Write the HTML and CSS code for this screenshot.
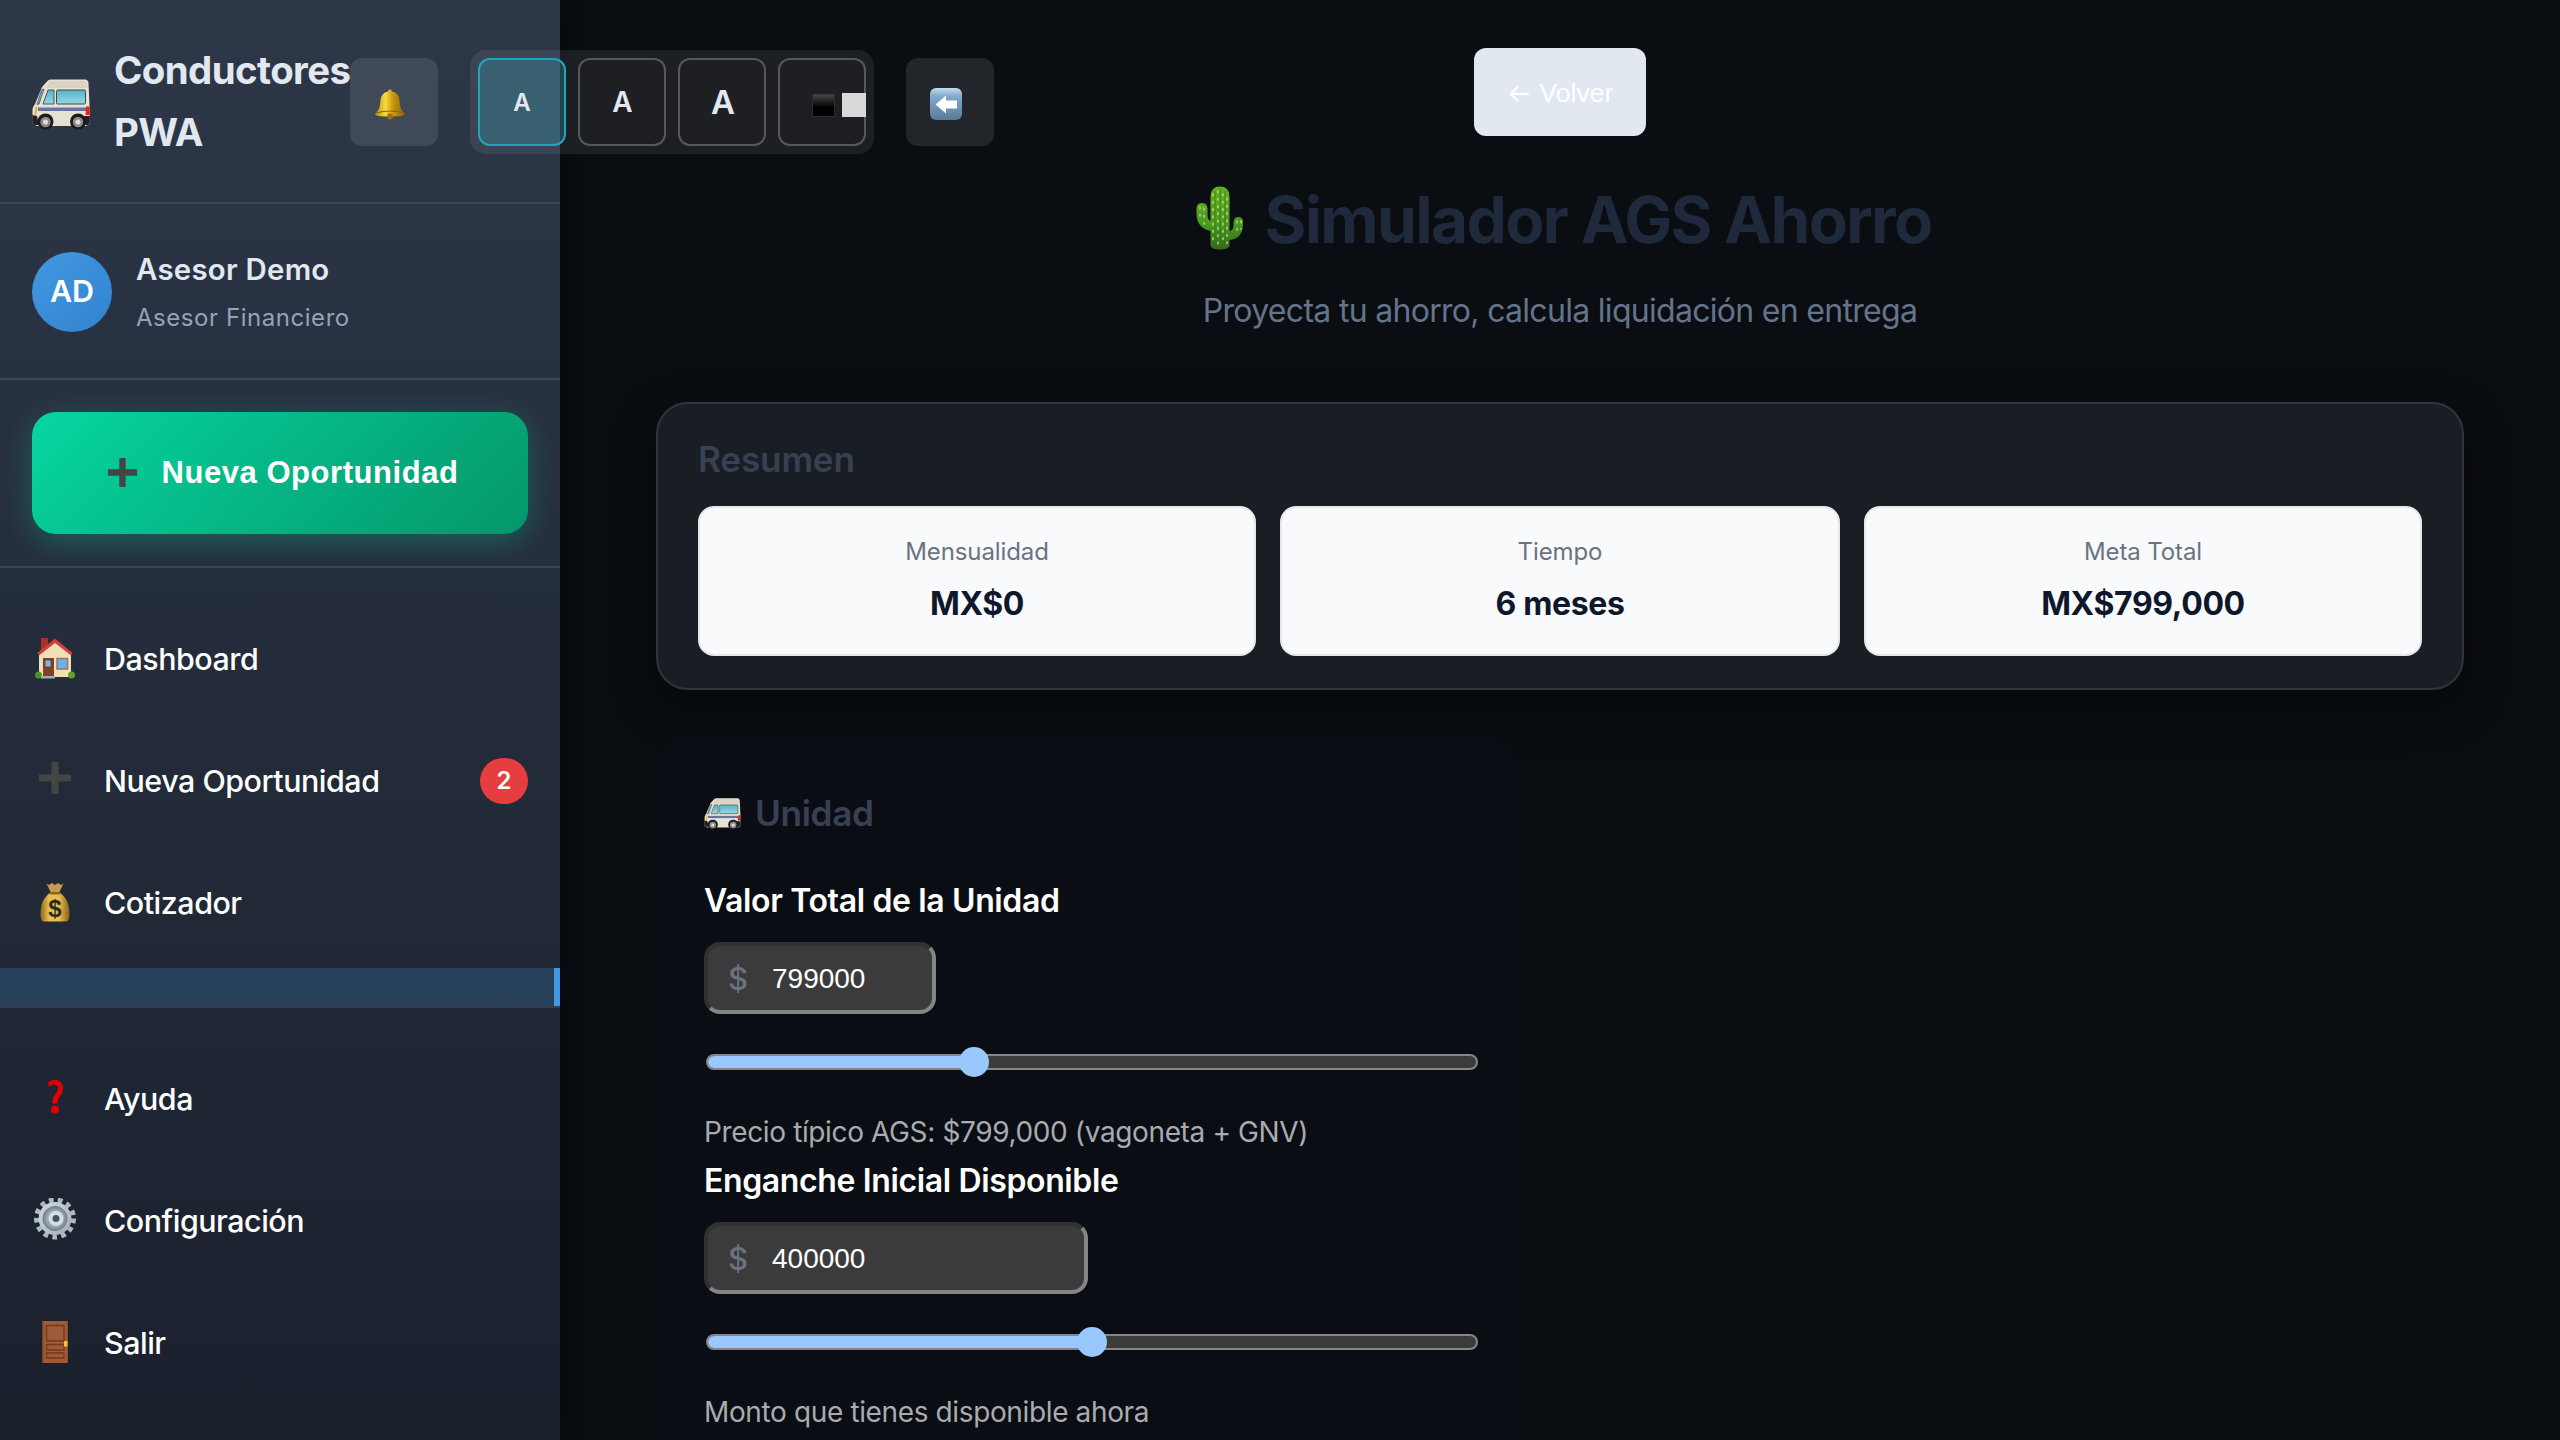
FILE: index.html
```html
<!DOCTYPE html>
<html lang="es">
<head>
<meta charset="utf-8">
<title>Conductores PWA</title>
<link rel="stylesheet" href="styles.css">
</head>
<body>
<svg class="defs" width="0" height="0" aria-hidden="true">
  <defs>
    <linearGradient id="g-glass" x1="0" y1="0" x2="0" y2="1"><stop offset="0" stop-color="#5fb0c2"/><stop offset="1" stop-color="#8fdbe6"/></linearGradient>
    <linearGradient id="g-gold" x1="0" y1="0" x2="1" y2="0"><stop offset="0" stop-color="#b98a12"/><stop offset=".35" stop-color="#f7dc3c"/><stop offset=".6" stop-color="#c9970f"/><stop offset="1" stop-color="#8a6204"/></linearGradient>
    <linearGradient id="g-black" x1="0" y1="0" x2="0" y2="1"><stop offset="0" stop-color="#4a4a4a"/><stop offset=".6" stop-color="#000"/></linearGradient>
    <linearGradient id="g-arrow" x1="0" y1="0" x2="0" y2="1"><stop offset="0" stop-color="#c3dcee"/><stop offset=".25" stop-color="#83abcd"/><stop offset="1" stop-color="#587a98"/></linearGradient>
    <linearGradient id="g-cactus" x1="0" y1="0" x2="0" y2="1"><stop offset="0" stop-color="#63b022"/><stop offset=".6" stop-color="#4a9a20"/><stop offset="1" stop-color="#35691a"/></linearGradient>
    <linearGradient id="g-bag" x1="0" y1="0" x2="1" y2="0"><stop offset="0" stop-color="#8f6420"/><stop offset=".3" stop-color="#e9c24c"/><stop offset=".65" stop-color="#e5bd48"/><stop offset="1" stop-color="#8a5c1c"/></linearGradient>
    <linearGradient id="g-gear" x1="0" y1="0" x2="1" y2="1"><stop offset="0" stop-color="#cfdbe3"/><stop offset="1" stop-color="#a3adb6"/></linearGradient>
    <symbol id="van" viewBox="0 0 58 51">
      <path d="M16 1.500Q17 .5 19 .5H53Q56 .5 56.500 4L57.500 26V45L54 47H5L.5 45V30Q1 27 3 25L10 8Z" fill="#e6e2d3"/>
      <path d="M14 9L18 2H54L56 9Z" fill="#d9d5c2"/>
      <path d="M9.500 11L12 10L7 25L5 25.500Z" fill="#6fb9c6" stroke="#33464e" stroke-width=".7"/>
      <path d="M16 11H22V25H11Z" fill="url(#g-glass)" stroke="#3a4950" stroke-width=".9"/>
      <rect x="24.500" y="11" width="29" height="14" rx="1.200" fill="url(#g-glass)" stroke="#3a4950" stroke-width="1"/>
      <path d="M6 28.500H54V32H6Z" fill="#6874a8"/>
      <path d="M3.500 28L5.500 28L4 37L2.500 35Z" fill="#f3a93b"/>
      <path d="M54 27.500H57.500V36H53.500Z" fill="#ea2411"/>
      <path d="M.3 36L5 37L7 46H2Q.3 46 .3 44ZM50 37H57.700V44Q57.500 46.500 52 46Z" fill="#222"/>
      <g><circle cx="13.500" cy="42.500" r="8" fill="#1b1b1b"/><circle cx="13.500" cy="43" r="5.200" fill="#8c8c8c"/><circle cx="13.500" cy="43" r="2.500" fill="#ddd"/></g>
      <g><circle cx="46" cy="42.500" r="8" fill="#1b1b1b"/><circle cx="46" cy="43" r="5.200" fill="#8c8c8c"/><circle cx="46" cy="43" r="2.500" fill="#ddd"/></g>
    </symbol>
    <symbol id="plus" viewBox="0 0 46 46"><path d="M19.500 4H26.500V16.500H39V23.500H26.500V36H19.500V23.500H7V16.500H19.500Z" fill="#454545"/></symbol>
  </defs>
</svg>
<div class="app">
  <aside class="sidebar">
    <header class="brand">
      <svg class="brand-icon"><use href="#van"/></svg>
      <div class="brand-name">Conductores PWA</div>
    </header>
    <section class="user">
      <div class="avatar">AD</div>
      <div class="user-text">
        <div class="user-name">Asesor Demo</div>
        <div class="user-role">Asesor Financiero</div>
      </div>
    </section>
    <section class="cta-wrap">
      <div class="cta"><svg class="cta-icon" viewBox="7 4 32 32"><use href="#plus" width="46" height="46"/></svg><span>Nueva Oportunidad</span></div>
    </section>
    <nav class="nav">
      <div class="item">
        <svg class="icon" viewBox="0 0 46 46">
          <path d="M9 2H16V12L9 17Z" fill="#a5312a"/>
          <path d="M7 18L23 5L39 18V41H7Z" fill="#f0dfb9"/>
          <path d="M23 2.500L40.500 17L39 19.500L23 7L7 19.500L5.500 17Z" fill="#cf4138"/>
          <rect x="11" y="22" width="11" height="19" fill="#7d4029"/><rect x="13.500" y="24.500" width="5" height="6" fill="#79b9e8"/>
          <rect x="25" y="22.500" width="10.500" height="10.500" fill="#6bb2ea" stroke="#9a735a" stroke-width="1.500"/>
          <circle cx="6.500" cy="39" r="3.500" fill="#4f9420"/><circle cx="39.500" cy="39" r="3.500" fill="#5da127"/>
          <rect x="9" y="40" width="14" height="2.500" fill="#aaa"/>
        </svg><span>Dashboard</span>
      </div>
      <div class="item"><svg class="icon icon-plus"><use href="#plus"/></svg><span>Nueva Oportunidad</span><b class="badge">2</b></div>
      <div class="item">
        <svg class="icon" viewBox="0 0 46 46">
          <path d="M14.500 3.500L17 5L20 3L23 5L26 3L29 5L31.500 3.500L27 13H19Z" fill="#c69a52"/>
          <path d="M18 13H28C34 17 37 23 37.500 32Q38 41.500 34 41.500H12Q8 41.500 8.500 32C9 23 12 17 18 13Z" fill="url(#g-bag)"/>
          <rect x="17.500" y="12" width="11" height="2.500" rx="1" fill="#8f641f"/>
          <text x="23" y="37" text-anchor="middle" class="bag-sign">$</text>
        </svg><span>Cotizador</span>
      </div>
      <div class="item-active"></div>
    </nav>
    <nav class="nav nav-bottom">
      <div class="item">
        <svg class="icon" viewBox="0 0 46 46"><path d="M16 6.500Q20 3 25 4Q31.500 6 31 13Q30.500 18 27 21.500Q25 24 25.500 27.500H20.500Q19.500 22 23.500 18Q26.500 14.500 26 11Q25 8 21.500 8.500Q18.500 9 17 11Z" fill="#e30000"/><circle cx="23" cy="33.500" r="4" fill="#e30000"/></svg>
        <span>Ayuda</span>
      </div>
      <div class="item">
        <svg class="icon" viewBox="0 0 46 46">
          <circle cx="23" cy="20.500" r="18.500" fill="none" stroke="#aeb9c2" stroke-width="5" stroke-dasharray="4.700 4.242"/>
          <circle cx="23" cy="20.500" r="16.500" fill="url(#g-gear)"/>
          <circle cx="23" cy="20.500" r="12" fill="#84909a" stroke="#6d7881" stroke-width="1"/>
          <circle cx="23" cy="20.500" r="9.500" fill="#9ba7b0"/>
          <circle cx="24" cy="20.500" r="5.500" fill="#4a545c" stroke="#d3dfe7" stroke-width="4"/>
        </svg><span>Configuración</span>
      </div>
      <div class="item">
        <svg class="icon" viewBox="0 0 46 46">
          <rect x="10.500" y="1" width="25.500" height="42" fill="#a05a38"/>
          <path d="M11 1V43M35.500 1V43" stroke="#8a4a2b"/>
          <path d="M14.500 5.500H32V21H14.500ZM14.500 24.500H32V30H14.500ZM14.500 33H32V38H14.500Z" fill="#9f5a37" stroke="#74391d" stroke-width="1.300"/>
          <rect x="32" y="21" width="3.500" height="5.500" fill="#f1c433"/>
        </svg><span>Salir</span>
      </div>
    </nav>
  </aside>

  <main class="main">
    <div class="back"><span class="back-arrow">←</span> Volver</div>
    <h1 class="title">
      <svg class="cactus" viewBox="0 0 48 64">
        <path d="M14.500 10Q15 .5 24 .5Q33 .5 33.500 10V45Q38 44 37.500 39V36Q38 31 42.500 31Q47.500 31 47 37Q47 53 33.500 54V60Q32 63.500 24 63.500Q16 63.500 14.500 60V45Q.5 42 .5 27V22Q1 17 6 17Q11.500 17 11.500 23V30Q12 34 14.500 35Z" fill="url(#g-cactus)"/>
        <path d="M19 5V60M24 2V62M29 5V60" stroke="#2f7a12" stroke-opacity=".45" stroke-width="1.500"/>
        <path d="M17 8V58M22 5V58M27 8V58M31 12V58M4 21V34M8 22V38M41 35V46M45 35V43" stroke="#cfe08c" stroke-width="1.300" stroke-dasharray="1.800 5.500" stroke-linecap="round"/>
      </svg><span>Simulador AGS Ahorro</span>
    </h1>
    <p class="subtitle">Proyecta tu ahorro, calcula liquidación en entrega</p>
    <section class="summary">
      <h2 class="heading">Resumen</h2>
      <div class="stats">
        <div class="stat"><div class="stat-label">Mensualidad</div><div class="stat-value">MX$0</div></div>
        <div class="stat"><div class="stat-label">Tiempo</div><div class="stat-value">6 meses</div></div>
        <div class="stat"><div class="stat-label">Meta Total</div><div class="stat-value">MX$799,000</div></div>
      </div>
    </section>
    <section class="unit">
      <h2 class="heading unit-heading"><svg class="unit-icon"><use href="#van"/></svg><span>Unidad</span></h2>
      <div class="field">
        <div class="label">Valor Total de la Unidad</div>
        <div class="input input-short"><span class="cur">$</span><span class="num">799000</span></div>
        <div class="slider"><div class="track"><div class="fill" style="width:266px"></div></div><div class="thumb" style="left:253px"></div></div>
        <div class="help">Precio típico AGS: $799,000 (vagoneta + GNV)</div>
      </div>
      <div class="field">
        <div class="label">Enganche Inicial Disponible</div>
        <div class="input input-long"><span class="cur">$</span><span class="num">400000</span></div>
        <div class="slider"><div class="track"><div class="fill" style="width:384px"></div></div><div class="thumb" style="left:371px"></div></div>
        <div class="help">Monto que tienes disponible ahora</div>
      </div>
    </section>
  </main>

  <div class="toolbar">
    <div class="tool"><svg width="32" height="32" viewBox="0 0 32 32"><path d="M16 1.500Q18 1.500 18 3.500Q25 5 25.500 12Q26 20 28 22.500L31 26Q31 28.500 16 28.500Q1 28.500 1 26L4 22.500Q6 20 6.500 12Q7 5 14 3.500Q14 1.500 16 1.500Z" fill="url(#g-gold)"/><path d="M2 25Q16 21 30 25" fill="none" stroke="#8a6204" stroke-width="1.200"/><circle cx="16" cy="28.500" r="3" fill="#a86a14"/></svg></div>
    <div class="tool-group">
      <div class="size size-s size-on">A</div>
      <div class="size size-m">A</div>
      <div class="size size-l">A</div>
      <div class="size size-contrast"><svg width="56" height="24" viewBox="0 0 56 24"><rect x="2.500" y="1" width="22" height="22.500" fill="url(#g-black)" stroke="#2c2c2c"/><rect x="32" width="24" height="24" fill="#d9d9d9"/></svg></div>
    </div>
    <div class="tool"><svg width="32" height="32" viewBox="0 0 32 32"><rect width="32" height="32" rx="6" fill="url(#g-arrow)"/><path d="M5.500 16.500L16 7.500V12.500H27V20.500H16V25.500Z" fill="#fff"/></svg></div>
  </div>
</div>
</body>
</html>
```
FILE: styles.css
```css
* { box-sizing: border-box; margin: 0; padding: 0; }
body {
  width: 2560px; height: 1440px; overflow: hidden;
  background: #0a0d11; color: #fff;
  font-family: Inter, "Liberation Sans", sans-serif;
}
.defs { position: absolute; }
.app { position: relative; display: flex; width: 2560px; height: 1440px; overflow: hidden; }

/* Sidebar */
.sidebar {
  flex: none; width: 560px; height: 1440px;
  background: linear-gradient(180deg, #2d3748 0%, #1a202c 100%);
  box-shadow: 4px 0 20px rgba(0, 0, 0, .3);
}
.brand { display: flex; align-items: center; height: 204px; padding: 0 32px; border-bottom: 2px solid rgba(255, 255, 255, .1); }
.brand-icon { flex: none; width: 58px; height: 51px; margin: 6px 24px 0 0; }
.brand-name { width: 240px; font-size: 38.4px; line-height: 62px; font-weight: 700; letter-spacing: -.58px; color: #e2e8f0; }
.user { display: flex; align-items: center; gap: 24px; height: 176px; padding: 1px 32px 0; border-bottom: 2px solid rgba(255, 255, 255, .1); }
.avatar {
  display: flex; align-items: center; justify-content: center;
  width: 80px; height: 80px; padding-bottom: 1px; border-radius: 50%;
  background: linear-gradient(135deg, #4299e1, #3182ce);
  font-size: 30.4px; font-weight: 600;
}
.user-name { font-size: 29.4px; line-height: 46px; font-weight: 600; letter-spacing: .25px; color: #e2e8f0; }
.user-role { margin-top: 6px; font-size: 24px; line-height: 38px; letter-spacing: .55px; color: #94a3b8; }
.cta-wrap { height: 188px; padding: 32px; border-bottom: 2px solid rgba(255, 255, 255, .1); }
.cta {
  display: flex; align-items: center; justify-content: center; height: 122px; padding: 0 0 1px 6px;
  border-radius: 24px; background: linear-gradient(135deg, #06d6a0, #059669);
  box-shadow: 0 8px 30px rgba(6, 214, 160, .3);
  font: 700 31px/48px "Liberation Sans", sans-serif; letter-spacing: .55px;
}
.cta-icon { width: 29px; height: 29px; margin-right: 25px; }
.nav { height: 440px; padding-top: 34px; border-bottom: 2px solid rgba(255, 255, 255, .1); }
.nav-bottom { border: 0; }
.item { display: flex; align-items: center; height: 122px; padding: 0 32px 8px; font-size: 30.4px; line-height: 48px; font-weight: 500; letter-spacing: -.46px; }
.icon { flex: none; width: 46px; height: 46px; margin-right: 26px; }
.bag-sign { font: 700 24px "Liberation Sans", sans-serif; letter-spacing: 0; fill: #2c2a20; }
.badge {
  display: flex; align-items: center; justify-content: center;
  width: 48px; height: 46px; margin-left: auto; border-radius: 23px;
  background: #e53e3e; font-size: 24px; font-weight: 600; letter-spacing: 0;
}
.item-active { height: 38px; background: rgba(66, 153, 225, .22); border-right: 6px solid #4299e1; }

/* Floating accessibility toolbar */
.toolbar { position: absolute; left: 350px; top: 50px; display: flex; align-items: center; gap: 32px; }
.tool { display: flex; align-items: center; justify-content: center; width: 88px; height: 88px; padding: 4px 8px 0 0; border-radius: 12px; background: rgba(255, 255, 255, .1); }
.tool-group { display: flex; gap: 12px; padding: 8px; border-radius: 16px; background: rgba(255, 255, 255, .08); }
.size {
  display: flex; align-items: center; justify-content: center;
  width: 88px; height: 88px; border: 2px solid rgba(255, 255, 255, .25); border-radius: 12px;
  color: #e2e8f0; font-weight: 600;
}
.size-s { font-size: 24px; }
.size-m { font-size: 28px; padding-left: 1px; }
.size-l { font-size: 33px; padding-left: 2px; }
.size-on { border-color: #20a6bc; background: rgba(50, 155, 175, .32); }
.size-contrast { justify-content: flex-end; padding-top: 6px; }
.size-contrast svg { flex: none; margin-right: -2px; }

/* Main */
.main { width: 2000px; padding: 48px 96px 0; display: flex; flex-direction: column; align-items: center; }
.back {
  flex: none; width: 172px; height: 88px; border-radius: 12px; background: #e2e8f0; color: #fff;
  font: 26.67px/90px "Liberation Sans", sans-serif; text-align: center; white-space: nowrap;
}
.back-arrow { font-family: Inter, sans-serif; line-height: 1; }
.title { display: flex; margin-top: 46px; padding-left: 6px; font-size: 64px; line-height: 76px; font-weight: 700; letter-spacing: -1.65px; color: #1e293b; white-space: nowrap; }
.cactus { width: 48px; height: 64px; margin: 4px 20px 0 2px; }
.subtitle { margin-top: 27px; font-size: 32px; line-height: 52px; letter-spacing: -.7px; color: #64748b; }
.summary {
  flex: none; width: 1808px; height: 288px; margin-top: 65px; padding: 27px 40px 0;
  border: 2px solid #313438; border-radius: 32px; background: #191d24;
  box-shadow: 0 16px 48px rgba(0, 0, 0, .4);
}
.heading { font-size: 35.2px; line-height: 56px; font-weight: 600; letter-spacing: -.2px; color: #374151; }
.stats { display: grid; grid-template-columns: 558px 560px 558px; gap: 24px; margin-top: 19px; }
.stat { height: 150px; padding-top: 25px; border: 2px solid #e5e7eb; border-radius: 16px; background: #f9fafc; text-align: center; }
.stat-label { font-size: 24px; line-height: 38px; letter-spacing: -.1px; color: #6b7280; }
.stat-value { margin-top: 8px; font-size: 32px; line-height: 50px; font-weight: 700; letter-spacing: -.38px; color: #0f172a; }
.unit { flex: none; width: 860px; height: 900px; margin-top: 48px; padding: 47px 32px 0 48px; align-self: flex-start; border-radius: 32px; background: #0a0d14; }
.unit-heading { display: flex; margin-bottom: 34px; letter-spacing: -.35px; }
.unit-icon { width: 37px; height: 32px; margin: 13px 14px 0 0; }
.field { height: 280px; }
.label { font-size: 32px; line-height: 51px; font-weight: 600; letter-spacing: -.37px; }
.input {
  display: flex; align-items: center; height: 72px; margin-top: 16px; padding: 1px 0 0 20px;
  border: 4px solid; border-color: #313131 #858585 #858585 #313131; border-radius: 16px; background: #3b3b3b;
}
.input-short { width: 232px; }
.input-long { width: 384px; }
.cur { width: 44px; font-size: 31px; line-height: 40px; color: #6b7280; font-weight: 500; }
.num { font: 28px "Liberation Sans", sans-serif; }
.slider { position: relative; width: 772px; height: 30px; margin: 33px 0 0 2px; padding-top: 7px; }
.track { height: 16px; border: 2px solid #858585; border-radius: 8px; background: #3b3b3b; overflow: hidden; }
.fill { height: 100%; background: #99c8ff; }
.thumb { position: absolute; top: 0; width: 30px; height: 30px; border-radius: 50%; background: #99c8ff; }
.help { margin-top: 33px; font-size: 28px; line-height: 45px; letter-spacing: -.37px; color: #a9abae; }
```
